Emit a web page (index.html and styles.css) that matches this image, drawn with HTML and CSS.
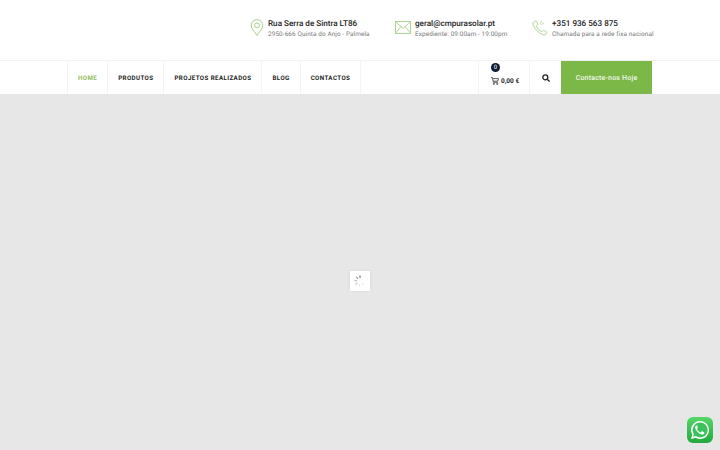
FILE: index.html
```html
<!DOCTYPE html>
<html lang="pt">
<head>
<meta charset="UTF-8">
<meta name="viewport" content="width=device-width, initial-scale=1.0">
<title>CM Pura Solar</title>
<link rel="stylesheet" href="styles.css">
</head>
<body>

<header class="topbar">
  <div class="info-item info-address">
    <svg class="info-icon" width="14" height="18" viewBox="0 0 14 18" fill="none" stroke="#a9d088" stroke-width="1">
      <path d="M7 16.500C4.500 12.500 1.200 9.800 1.200 6.500a5.800 5.800 0 0 1 11.600 0c0 3.300-3.300 6-5.800 10z"/>
      <circle cx="7" cy="6.400" r="2.400"/>
    </svg>
    <div>
      <div class="info-title">Rua Serra de Sintra LT86</div>
      <div class="info-sub">2950-666 Quinta do Anjo - Palmela</div>
    </div>
  </div>
  <div class="info-item info-mail">
    <svg class="info-icon" width="16" height="13" viewBox="0 0 16 13" fill="none" stroke="#a9d088" stroke-width="0.900">
      <rect x="0.500" y="0.500" width="15" height="12"/>
      <path d="M0.500 0.800L8 7.500l7.500-6.700M0.500 12.200l5.300-6.600M15.500 12.200l-5.300-6.600"/>
    </svg>
    <div>
      <div class="info-title">geral@cmpurasolar.pt</div>
      <div class="info-sub">Expediente: 09:00am - 19:00pm</div>
    </div>
  </div>
  <div class="info-item info-phone">
    <svg class="info-icon" width="16" height="16" viewBox="0 0 16 16" fill="none" stroke="#a9d088" stroke-width="0.900">
      <path d="M1 2.500C2 1.200 3.500 0.700 4.200 1.200l1.500 2.600c0.300 0.700-1.200 1.500-1.200 2.200 0.500 2.200 3 4.800 5.300 5.500 0.800 0 1.300-1.400 2-1.100l2.700 1.500c0.600 0.700 0 2.100-1.200 3C9.500 16 0 7.500 1 2.500z"/>
      <path d="M8.500 1.500c1.500 0.300 2.600 1.300 3 2.800M8.200 3.500c0.700 0.200 1.100 0.600 1.300 1.200"/>
    </svg>
    <div>
      <div class="info-title">+351 936 563 875</div>
      <div class="info-sub">Chamada para a rede fixa nacional</div>
    </div>
  </div>
</header>

<nav class="navbar">
  <ul class="menu">
    <li class="menu-item active">HOME</li>
    <li class="menu-item">PRODUTOS</li>
    <li class="menu-item">PROJETOS REALIZADOS</li>
    <li class="menu-item">BLOG</li>
    <li class="menu-item">CONTACTOS</li>
  </ul>
  <div class="nav-right">
    <div class="cart">
      <span class="cart-count">0</span>
      <svg width="8" height="8" viewBox="0 0 9 9" fill="none" stroke="#222" stroke-width="0.800">
        <path d="M0 0.500h1.500l1.200 5.500h5M2 1.800h6.500l-0.800 2.900H2.600"/>
        <circle cx="3.200" cy="7.800" r="0.700"/>
        <circle cx="7" cy="7.800" r="0.700"/>
      </svg>
      <span class="cart-total">0,00 €</span>
    </div>
    <div class="search">
      <svg width="8" height="8" viewBox="0 0 8 8" fill="none" stroke="#222" stroke-width="1.300">
        <circle cx="3.300" cy="3.300" r="2.500"/>
        <path d="M5.200 5.200L7.600 7.600"/>
      </svg>
    </div>
    <a class="cta">Contacte-nos Hoje</a>
  </div>
</nav>

<main class="loading-area">
  <div class="spinner-box">
    <svg width="12" height="12" viewBox="0 0 10 10" stroke-width="0.900" fill="none">
      <path d="M5 0.500V2.500" stroke="#666"/>
      <path d="M2 1.500L3.200 3.200" stroke="#888"/>
      <path d="M0.500 4.500L2.500 5" stroke="#aaa"/>
      <path d="M1 8L2.800 6.700" stroke="#c4c4c4"/>
      <path d="M4.500 9.500L4.800 7.500" stroke="#ddd"/>
      <path d="M8 8.500L6.800 6.800" stroke="#eee"/>
    </svg>
  </div>
</main>

<a class="whatsapp">
  <svg width="20" height="20" viewBox="0 0 20 20">
    <path d="M10 1a9 9 0 0 0-7.700 13.600L1 19l4.500-1.200A9 9 0 1 0 10 1z" fill="#fff"/>
    <path d="M10 2.600a7.400 7.400 0 0 0-6.200 11.300l-0.800 2.800 2.900-0.700A7.400 7.400 0 1 0 10 2.600z" fill="#3ac15a"/>
    <path d="M7.400 5.900c-0.300-0.500-0.500-0.500-0.900-0.500-0.900 0.200-1.500 1-1.400 2.200 0.300 2.800 4 6.700 7 6.900 1.300 0 2.200-0.800 2.300-1.800 0-0.300-0.100-0.400-0.400-0.500l-1.900-0.900c-0.300-0.100-0.500 0-0.700 0.300l-0.600 0.700c-0.200 0.200-0.400 0.200-0.600 0.100-1.300-0.500-2.400-1.500-3.100-2.800-0.100-0.200 0-0.400 0.100-0.500l0.500-0.700c0.100-0.200 0.100-0.400 0-0.600z" fill="#fff"/>
  </svg>
</a>

</body>
</html>
```

FILE: styles.css
```css
body {
  margin: 0;
  background: #fff;
  font-family: Roboto, "Liberation Sans", sans-serif;
  text-rendering: geometricPrecision;
  height: 450px;
  overflow: hidden;
  display: flex;
  flex-direction: column;
}

.topbar {
  height: 60px;
  display: flex;
  padding-left: 250px;
  box-sizing: border-box;
}

.info-item {
  display: flex;
  align-items: flex-start;
  padding-top: 18px;
}

.info-address { width: 145px; }
.info-mail { width: 137px; }

.info-icon {
  flex: none;
  margin-top: 1px;
}

.info-address .info-icon { margin-right: 4px; }
.info-mail .info-icon { margin-right: 4px; margin-top: 3px; }
.info-phone .info-icon { margin-right: 4px; margin-top: 2px; }

.info-title {
  font-size: 8.150px;
  font-weight: 500;
  line-height: 11px;
  color: #222;
}

.info-sub {
  font-size: 6.400px;
  line-height: 10px;
  color: #777;
  letter-spacing: 0.100px;
}

.navbar {
  height: 34px;
  border-top: 1px solid #f2f2f2;
  display: flex;
  justify-content: space-between;
  padding: 0 68px 0 67px;
  box-sizing: border-box;
}

.menu {
  list-style: none;
  margin: 0;
  padding: 0;
  display: flex;
  border-left: 1px solid #f4f4f4;
}

.menu-item {
  display: flex;
  align-items: center;
  padding: 0 10px;
  font-size: 6.200px;
  font-weight: 700;
  letter-spacing: 0.400px;
  color: #222;
  border-right: 1px solid #f4f4f4;
}

.menu-item.active { color: #8dbd5c; }

.nav-right {
  display: flex;
}

.cart {
  position: relative;
  width: 52px;
  box-sizing: border-box;
  padding: 6px 0 0 12px;
  display: flex;
  align-items: center;
  gap: 2px;
  border-left: 1px solid #f4f4f4;
  border-right: 1px solid #f4f4f4;
}

.cart-count {
  position: absolute;
  left: 12px;
  top: 2px;
  width: 9px;
  height: 9px;
  border-radius: 50%;
  background: #0e1c36;
  color: #fff;
  font-size: 6px;
  line-height: 9px;
  text-align: center;
}

.cart-total {
  font-size: 6.500px;
  font-weight: 700;
  color: #222;
}

.search {
  width: 31px;
  display: flex;
  align-items: center;
  justify-content: center;
}

.cta {
  width: 91px;
  display: flex;
  align-items: center;
  justify-content: center;
  background: #7cb848;
  color: #f1f7ea;
  font-size: 7px;
  font-weight: 500;
  letter-spacing: 0.200px;
}

.loading-area {
  flex: 1;
  background: #e7e7e7;
  display: flex;
  align-items: center;
  justify-content: center;
}

.spinner-box {
  width: 20px;
  height: 20px;
  background: #fff;
  display: flex;
  align-items: center;
  justify-content: center;
  margin-top: 17px;
  box-shadow: 0 0 3px rgba(0, 0, 0, 0.08);
}

.whatsapp {
  position: absolute;
  left: 687px;
  top: 417px;
  width: 26px;
  height: 26px;
  border-radius: 6px;
  background: linear-gradient(#55d768, #22a83e);
  display: flex;
  align-items: center;
  justify-content: center;
}
```
